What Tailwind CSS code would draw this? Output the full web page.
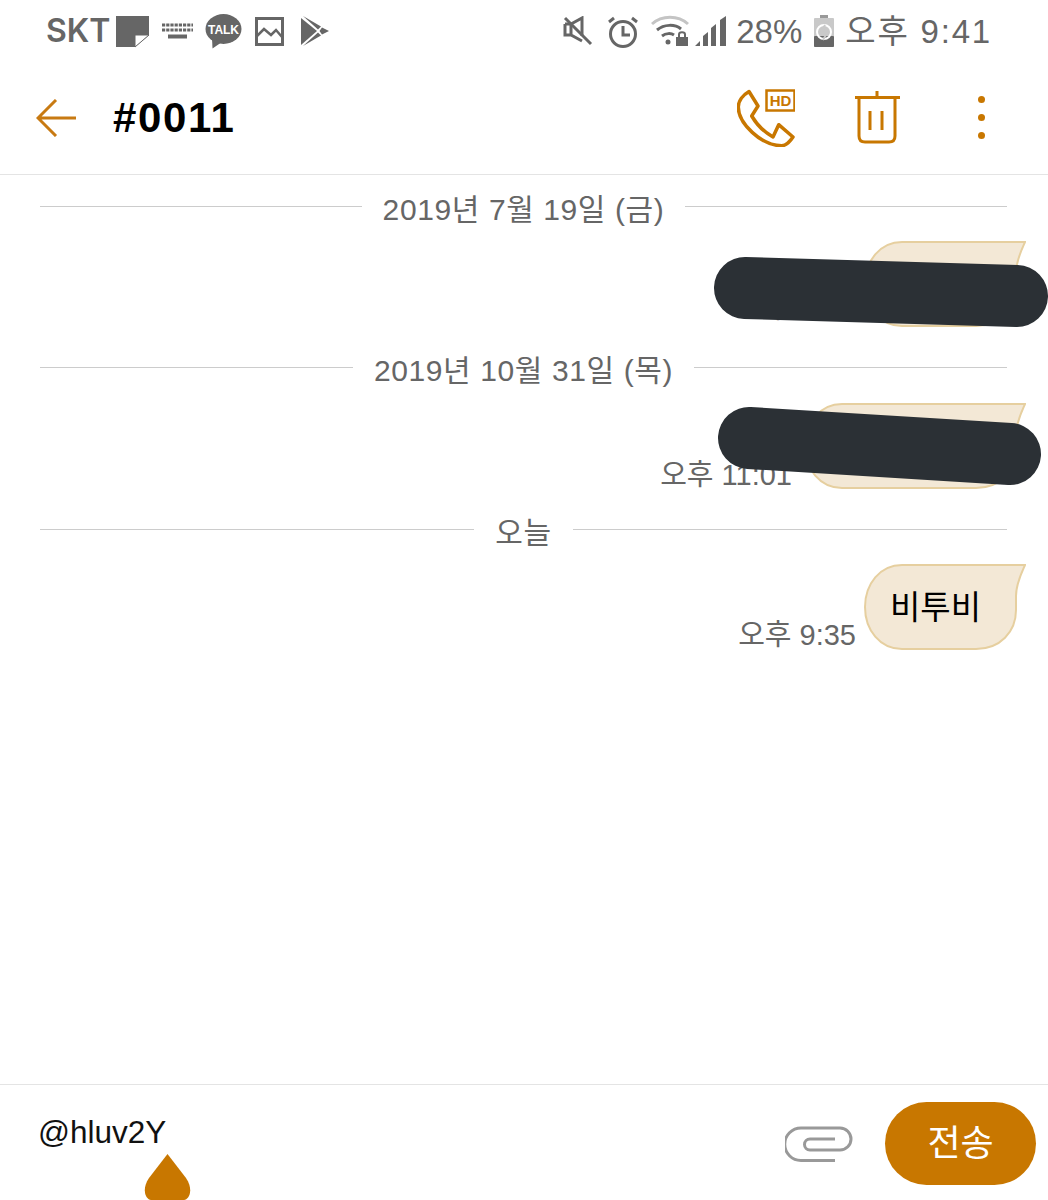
<!DOCTYPE html>
<html lang="ko">
<head>
    <meta charset="UTF-8">
    <meta name="viewport" content="width=device-width, initial-scale=1.0">
    <title>#0011</title>
    <script src="https://cdn.jsdelivr.net/npm/@tailwindcss/browser@4"></script>
</head>
<body class="bg-white font-['Liberation_Sans','Noto_Sans_CJK_KR',sans-serif]">
    <div class="relative w-[1048px] h-[1200px] flex flex-col overflow-hidden bg-white">

        <!-- status bar -->
        <div class="h-[62px] flex items-center justify-between pl-[46px] pr-[56px] text-[#666666]">
            <div class="flex items-center">
                <span class="font-['Inter'] text-[32px] font-semibold leading-none">SKT</span>
                <svg class="ml-[5px]" width="35" height="33" viewBox="0 0 35 33"><path d="M1 1H34V20L20 32H1Z" fill="#666666"/><path d="M34 20L20 32V20Z" fill="#fff" stroke="#666666" stroke-width="1"/></svg>
                <svg class="ml-[12px]" width="31" height="16" viewBox="0 0 31 16" fill="none" stroke="#666666" stroke-width="3"><path d="M0 2H31M0 7H31" stroke-dasharray="3.2 1"/><path d="M6 13.5H25" stroke-width="4"/></svg>
                <svg class="ml-[12px]" width="37" height="35" viewBox="0 0 37 35"><ellipse cx="18.5" cy="15" rx="18" ry="15" fill="#666666"/><path d="M7 24L7.500 34.500L17 28Z" fill="#666666"/><text x="18.500" y="19.500" text-anchor="middle" font-size="12" font-weight="700" fill="#fff">TALK</text></svg>
                <svg class="ml-[13px]" width="29" height="29" viewBox="0 0 29 29" fill="none" stroke="#666666"><rect x="1.500" y="1.500" width="26" height="26" stroke-width="3"/><path d="M2 19L9 12L16 18L21 13L27 20" stroke-width="2.500"/></svg>
                <svg class="ml-[16px]" width="30" height="32" viewBox="0 0 30 32" fill="#666666"><path d="M1 3L17 16L1 30Z"/><path d="M3 1L21 11.500L18 14.500Z"/><path d="M3 31L21 20.500L18 17.500Z"/><path d="M22 12.500L29 16L22 19.500L19.500 16Z"/></svg>
            </div>
            <div class="flex items-center">
                <svg width="30" height="30" viewBox="0 0 30 30" fill="none" stroke="#666666" stroke-width="3"><path d="M2 8H8L19 2V20M8 8V19M2 8V19H8L19 25"/><path d="M2 2L28 28"/></svg>
                <svg class="ml-[14px]" width="32" height="33" viewBox="0 0 32 33" fill="none" stroke="#666666" stroke-width="3"><circle cx="16" cy="19" r="12.500"/><path d="M16 11V20H23M2 7L7 3M30 7L25 3"/></svg>
                <svg class="ml-[12px]" width="38" height="32" viewBox="0 0 38 32" fill="none" stroke-width="3"><path d="M1 9C11 0 27 0 37 9" stroke="#c4c4c4"/><path d="M6 15C13 9 24 9 30 14M11 21C15 18 20 18 23 20" stroke="#666666"/><circle cx="17" cy="27" r="2.500" fill="#666666" stroke="none"/><rect x="25" y="22" width="12" height="9" fill="#666666" stroke="none"/><path d="M28 22V19.500C28 16.500 34 16.500 34 19.500V22" stroke="#666666" stroke-width="2"/></svg>
                <svg class="ml-[6px]" width="32" height="32" viewBox="0 0 32 32" fill="#666666"><path d="M0 31L5 26V31ZM8 31V21L13 17V31ZM16 31V13L21 9V31ZM25 31V5L31 1V31Z"/></svg>
                <span class="ml-[9px] text-[33px] leading-none">28%</span>
                <svg class="ml-[12px]" width="20" height="32" viewBox="0 0 20 32"><rect x="6" y="0" width="8" height="3" fill="#999999"/><rect x="0" y="3" width="20" height="29" rx="1" fill="#c9c9c9"/><rect x="0" y="21" width="20" height="11" rx="1" fill="#666666"/><circle cx="10" cy="17" r="7" fill="none" stroke="#fff" stroke-width="2"/><path d="M11 10L7 18H13L9 25" fill="none" stroke="#c9c9c9" stroke-width="2"/></svg>
                <span class="ml-[11px] text-[33px] leading-none tracking-[1.8px] whitespace-nowrap">오후 9:41</span>
            </div>
        </div>

        <!-- title bar -->
        <header class="h-[113px] flex items-center border-b border-[#e4e4e4] pb-[1px] pl-[36px] pr-[63px]">
            <svg width="40" height="38" viewBox="0 0 40 38" fill="none" stroke="#c87a12" stroke-width="3"><path d="M40 19H2M20 1L2 19L20 37"/></svg>
            <h1 class="ml-[37px] text-[42px] font-bold text-black tracking-[1.6px] leading-none">#0011</h1>
            <div class="ml-auto flex items-center">
                <svg width="58" height="58" viewBox="0 0 58 58" fill="none" stroke="#c87700" stroke-width="3.500"><path d="M12 2.500L21 17L14.700 27C20 36 27 43 36 48L41.700 35.700L56 48C52 54 48 56.700 44.700 56.700C24 56.700 1.300 34 1.300 18C1.300 12 6 6 12 2.500Z" stroke-linejoin="round"/><rect x="29.500" y="1.500" width="28" height="20" stroke-width="2.500"/><text x="43.500" y="17" text-anchor="middle" font-size="15" font-weight="700" fill="#c87700" stroke="none">HD</text></svg>
                <svg class="ml-[60px]" width="46" height="54" viewBox="0 0 46 54" fill="none" stroke="#c87700" stroke-width="3"><path d="M0 6.500H45M22 0V6.500M15 20V39M27 20V39M4 6.500V45C4 49 6 51 10 51H34C38 51 40 49 40 45V6.500"/></svg>
                <div class="ml-[77px] flex flex-col gap-[11px]">
                    <span class="w-[7px] h-[7px] rounded-full bg-[#c87700]"></span>
                    <span class="w-[7px] h-[7px] rounded-full bg-[#c87700]"></span>
                    <span class="w-[7px] h-[7px] rounded-full bg-[#c87700]"></span>
                </div>
            </div>
        </header>

        <!-- messages -->
        <main class="flex-1 pl-[40px] pr-[41px] pt-[11px] text-[#666666] text-[29px]">
            <div class="flex items-center h-[40px]">
                <div class="flex-1 h-px bg-[#cccccc]"></div>
                <span class="mx-[21px] pt-[6px] text-[30px] tracking-[0.6px] whitespace-nowrap">2019년 7월 19일 (금)</span>
                <div class="flex-1 h-px bg-[#cccccc]"></div>
            </div>
            <div class="flex justify-end items-end mt-[15px] -mr-[19px]">
                <span class="-mb-[3px] mr-[8px] whitespace-nowrap">오후 9:35</span>
                <div class="relative w-[162px] h-[86px]">
                    <svg class="absolute inset-0" width="162" height="86" viewBox="0 0 162 86"><path d="M38 1H161C157 10 152 20 152 32V46C152 68 136 85 112 85H38C16 85 1 66 1 43C1 20 16 1 38 1Z" fill="#f3e8d6" stroke="#e6cf9f" stroke-width="2"/></svg>
                </div>
            </div>

            <div class="flex items-center h-[40px] mt-[20px]">
                <div class="flex-1 h-px bg-[#cccccc]"></div>
                <span class="mx-[21px] pt-[6px] text-[30px] tracking-[0.6px] whitespace-nowrap">2019년 10월 31일 (목)</span>
                <div class="flex-1 h-px bg-[#cccccc]"></div>
            </div>
            <div class="flex justify-end items-end mt-[16px] -mr-[19px]">
                <span class="-mb-[8px] mr-[12px] whitespace-nowrap">오후 11:01</span>
                <div class="relative w-[222px] h-[86px]">
                    <svg class="absolute inset-0" width="222" height="86" viewBox="0 0 222 86"><path d="M38 1H221C217 10 212 20 212 32V46C212 68 196 85 172 85H38C16 85 1 66 1 43C1 20 16 1 38 1Z" fill="#f3e8d6" stroke="#e6cf9f" stroke-width="2"/></svg>
                </div>
            </div>

            <div class="flex items-center h-[40px] mt-[20px]">
                <div class="flex-1 h-px bg-[#cccccc]"></div>
                <span class="mx-[21px] pt-[6px] text-[30px] tracking-[0.6px] whitespace-nowrap">오늘</span>
                <div class="flex-1 h-px bg-[#cccccc]"></div>
            </div>
            <div class="flex justify-end items-end mt-[15px] -mr-[19px]">
                <span class="-mb-[7px] mr-[8px] whitespace-nowrap">오후 9:35</span>
                <div class="relative w-[162px] h-[86px] flex items-center pl-[26px] pt-[2px]">
                    <svg class="absolute inset-0" width="162" height="86" viewBox="0 0 162 86"><path d="M38 1H161C157 10 152 20 152 32V46C152 68 136 85 112 85H38C16 85 1 66 1 43C1 20 16 1 38 1Z" fill="#f3e8d6" stroke="#e6cf9f" stroke-width="2"/></svg>
                    <span class="relative text-[33px] text-black whitespace-nowrap">비투비</span>
                </div>
            </div>
        </main>

        <!-- input -->
        <footer class="h-[116px] flex items-start border-t border-[#e4e4e4] pl-[38px] pr-[12px]">
            <span class="mt-[32px] text-[31.5px] text-[#111111] leading-none">@hluv2Y</span>
            <svg class="ml-auto mt-[41px]" width="68" height="37" viewBox="0 0 68 37" fill="none" stroke="#999999" stroke-width="3"><path d="M50 34.500H16A16 16 0 0 1 16 2H55A11 11 0 0 1 55 24H25A5.500 5.500 0 0 1 25 13H50"/></svg>
            <button class="ml-[32px] mt-[17px] w-[151px] h-[83px] rounded-full bg-[#c87700] text-white text-[36px] flex items-center justify-center">전송</button>
        </footer>

        <!-- text cursor handle -->
        <svg class="absolute left-[144px] top-[1154px]" width="47" height="46" viewBox="0 0 47 46"><path d="M23.500 0L42 24C50 36 45 46 40 46H7C2 46 -3 36 5 24Z" fill="#c87700"/></svg>

        <!-- scribbled out parts of the screenshot -->
        <svg class="absolute inset-0" width="1048" height="1200" viewBox="0 0 1048 1200" fill="none" stroke="#2b3035" stroke-linecap="round"><path d="M745 288L1017 296" stroke-width="62"/><path d="M749 438L1010 454" stroke-width="62"/></svg>
    </div>
</body>
</html>
